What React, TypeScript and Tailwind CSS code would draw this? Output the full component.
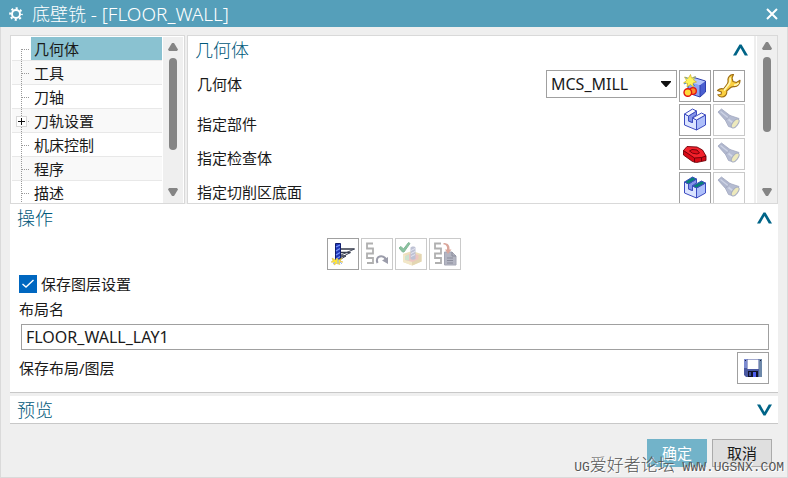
import { useState } from "react";
import type { ReactNode } from "react";

const treeItems = [
    { name: "几何体" },
    { name: "工具" },
    { name: "刀轴" },
    { name: "刀轨设置", children: true },
    { name: "机床控制" },
    { name: "程序" },
    { name: "描述" },
];

function GearIcon() {
    return (
        <svg width="14" height="14" viewBox="0 0 14 14" fill="none" stroke="#fff">
            <circle cx="7" cy="7" r="4" strokeWidth="2" />
            <circle cx="7" cy="7" r="5.8" strokeWidth="2" strokeDasharray="2.1 2.455" strokeDashoffset="1.05" />
        </svg>
    );
}

function Chevron({ down }: { down?: boolean }) {
    return (
        <svg width="15" height="12" viewBox="0 0 15 12" fill="#006487" className={down ? "rotate-180" : ""}>
            <path d="M0 11.500 6.500.5h2l6.500 11h-3.200L7.500 4 3.200 11.500z" />
        </svg>
    );
}

function NewGeometryIcon() {
    return (
        <svg width="24" height="24" viewBox="0 0 24 24">
            <path d="M5 7 11 3.500 22.500 7 17 11z" fill="#b4c6fb" />
            <path d="M5 7 17 11v12L5 19z" fill="#8ca2f3" />
            <path d="M17 11 22.500 7v11L17 23z" fill="#4a5fd0" />
            <path d="M5 7 11 3.500 22.500 7v11L17 23 5 19zM17 11v12" fill="none" stroke="#2d3fae" />
            <path d="M4 15h6v6H4z" fill="#f32b1c" />
            <circle cx="10" cy="17" r="3.300" fill="#ff8a2a" stroke="#e01010" strokeWidth="1.300" />
            <circle cx="4.800" cy="18.500" r="3.800" fill="#ffd83a" stroke="#e01010" strokeWidth="1.400" />
            <path d="M7.500.5 8.500 4l4-1.500L10.500 6l3 2-3.500 1 .5 4-3-2.500L4 13l.5-3.500L.5 9l3-2.500L1.500 3l4 1z" fill="#fff45a" stroke="#c7a512" strokeWidth=".6" />
            <path d="m2.500 3 2 2M1 10l2-1M12 2.500l-2 2M12 12l-2-2" stroke="#3e8bd8" />
        </svg>
    );
}

function WrenchIcon() {
    return (
        <svg width="24" height="24" viewBox="0 0 24 24">
            <path
                d="M16.500.5c-3.500 0-6 2.800-5.500 6 .3 2-.2 3-1.500 4.500L6.500 15c-1.500-.6-4-.3-6 1.500l4 1.500-.5 2.500-3.200.3c1.700 2.700 5.500 3 7.700.7 1.300-1.300 1.500-2.800 1.200-4.500l4-3.500c1-.8 2-1 3.500-.9 3.300.2 6-2.500 5.800-6.300L19.500 8.500 16 7.500 15 4z"
                fill="#fbd040"
                stroke="#9c6c12"
                strokeWidth="1.100"
                strokeLinejoin="round"
            />
            <path d="M13.500 3.500c-1 3 .2 4.500-1.500 6.500L7 16.500M17 11c2 .3 3.500-.5 4.500-2" fill="none" stroke="#fff7b5" strokeWidth="1.700" />
        </svg>
    );
}

function PartIcon({ top }: { top: string }) {
    return (
        <svg width="24" height="24" viewBox="0 0 24 24" stroke="#3c4bc0" strokeWidth="1" strokeLinejoin="round">
            <path d="M1.500 6 5.500 8v5l4 1.500v-5L13.500 12v10L1.500 17z" fill="#dbe4ff" />
            <path d="M13.500 12 22.500 7v10l-9 5z" fill="#aebffa" />
            <path d="M5.500 8 13.500 3v4L9.500 9.500v5l-4-1.500z" fill="#8494e8" />
            <path d="M1.500 6 9.500 1l4 2-8 5z" fill={top} />
            <path d="m9.500 10 9-5 4 2-9 5z" fill={top} />
        </svg>
    );
}

function CheckBodyIcon() {
    return (
        <svg width="24" height="24" viewBox="0 0 24 24" stroke="#6c0008" strokeWidth=".9" strokeLinejoin="round">
            <path d="M.5 8.500V13l9 6.500 4 1 9.500-2v-4.500l-11 1z" fill="#d80916" />
            <path d="M.5 8.500 4 4.500 14 5l5.500 3 3.500 6-4.500 1.500-7 .5z" fill="#f3222c" />
            <path d="M11.500 16v4.500M18.500 15.500V19" fill="none" />
            <path d="M6.500 9 9 7.500l5 .5 2.500 3-2.500 1-4.500-.8z" fill="#e0101c" />
        </svg>
    );
}

function FlashlightIcon() {
    return (
        <svg width="24" height="24" viewBox="0 0 24 24" className="opacity-70">
            <path d="M1 4 4.500 1 13 7.500 8.500 12.500z" fill="#8f99ba" stroke="#7a83a4" strokeWidth=".8" />
            <path d="m3.500 3.500 8 6.500" stroke="#b9c1da" strokeWidth="1.400" />
            <path d="m8.500 12.500 4.500-5 9 3-7 9-3.500-1z" fill="#97a1c0" stroke="#7a83a4" strokeWidth=".8" />
            <path d="m11.500 11.500 4 3" stroke="#bcc4dc" strokeWidth="1.800" />
            <ellipse cx="18.200" cy="15.500" rx="2.600" ry="5.200" transform="rotate(38 18.200 15.500)" fill="#e6e1a0" stroke="#858ea8" />
        </svg>
    );
}

function GenerateIcon() {
    return (
        <svg width="24" height="24" viewBox="0 0 24 24" fill="none">
            <path d="M10 7h13.500M9 7l-1 .5M10 10.500h9.500M10 14h5" stroke="#333848" strokeWidth="1.300" />
            <path d="M23.500 7 10 13M19.500 10.500 10 15.500M15 14l-5 3" stroke="#444a5c" />
            <path d="M4.500 1.500h5V18h-5z" fill="#2137b8" stroke="#101d6c" />
            <path d="m5 5 4-2M5 9l4-2.500M5 13l4-2.500M5 17l4-2.500" stroke="#7897fb" strokeWidth="1.200" />
            <path d="m1 16 3.500 2 1.500-2 1.500 2 3.500-2-2 3 3 1-4 .5 1 2-3.500-1-2.500 1.500.5-2.500-3.500-.5 2-1z" fill="#ffe63a" stroke="#d9b33a" strokeWidth=".5" />
            <path d="M7 17.500v4M2 22l2-2M11 22l-2-2" stroke="#8fb4ff" />
        </svg>
    );
}

function ReplayIcon() {
    return (
        <svg width="24" height="24" viewBox="0 0 24 24" fill="none" stroke="#b0b0b0" strokeWidth="1.800">
            <path d="M8 1.500H2v5h6v5H2v4.500h6v5H2" />
            <path d="M12.500 21c-3-7 6-9 8.500-3.500" stroke="#9b9caa" strokeWidth="2" />
            <path d="M17 18.500 23 15v7z" fill="#9b9caa" stroke="none" />
        </svg>
    );
}

function VerifyIcon() {
    return (
        <svg width="24" height="24" viewBox="0 0 24 24" className="opacity-50">
            <path d="m4 12 9-3 9.500 3v7.500l-9 4L4 20z" fill="#dcc078" />
            <path d="m4 12 9 3v8.500L4 20z" fill="#e6d193" />
            <path d="m22.500 12-9.500 3v8.500l9.500-4z" fill="#c9ae68" />
            <path d="m6 14 7-3 6.500 2v4l-6 3-7.500-2z" fill="#dc8d84" />
            <path d="m6 14 4-1.500v6L6 18z" fill="#9cc7a0" />
            <path d="M11.500 5.500c1-1.500 4.500-1.500 5 0V17c-1.500 1-3.500 1-5 0z" fill="#7f86aa" />
            <path d="m12 8.500 4-2M12 11.500l4-2M12 14.500l4-2" stroke="#c9cde6" />
            <path d="m0 6 2-1.500L4.500 7 9.500.5l1.500 1L5 10H3.500z" fill="#158742" stroke="#0e7333" />
        </svg>
    );
}

function ListIcon() {
    return (
        <svg width="24" height="24" viewBox="0 0 24 24" fill="none">
            <path d="M8 1.500H2v5h6v5H2v4.500h6v5H2" stroke="#b0b0b0" strokeWidth="1.800" />
            <path d="M11.500 10H19l4 4v9H11.500z" fill="#b3b5c2" stroke="#a4a6b4" />
            <path d="M19 10v4h4M14 16h6M14 18.500h6M14 21h6" stroke="#8b8d9c" />
            <path d="M10.500 1c4 0 6.500 2 6 6.500h2L15 12l-3-4.500h2c.5-3-1-5-3.500-5z" fill="#daa69b" />
        </svg>
    );
}

function SaveIcon() {
    return (
        <svg width="20" height="20" viewBox="0 0 20 20">
            <path d="M1 1h18v18H3l-2-2z" fill="#4a58a0" />
            <path d="M1 1h3v9H1z" fill="#7b8ad0" />
            <path d="M16 1h3v18h-3z" fill="#6d88a9" />
            <path d="M4.500 1.500h11V11h-11z" fill="#fff" />
            <path d="M5 13h10v6H5z" fill="#10142c" />
            <path d="M6 14h2v4H6z" fill="#3d4a9c" />
            <path d="M10 14h3v5h-3z" fill="#5060ee" />
            <path d="M2 2h1v1H2zM17 2h1v1h-1z" fill="#161b3e" />
        </svg>
    );
}

function IconButton({ label, disabled, children }: { label: string; disabled?: boolean; children: ReactNode }) {
    return (
        <button
            type="button"
            aria-label={label}
            disabled={disabled}
            className="flex size-8 shrink-0 items-center justify-center border border-[#a0a0a0] bg-white disabled:border-[#cacaca]"
        >
            {children}
        </button>
    );
}

function ScrollTrack({ long }: { long?: boolean }) {
    return (
        <div className="flex w-5 shrink-0 flex-col items-center bg-[#efefef] pt-1.5 pb-[7px]">
            <svg width="10" height="8" viewBox="0 0 10 8" fill="#858585"><path d="M4 0h2l4 6.500-1 1.500H1L0 6.500z" /></svg>
            <div className={long ? "mt-[7px] h-[92px] w-2 rounded-full bg-[#858585]" : "mt-[7px] h-[75px] w-2 rounded-full bg-[#858585]"}></div>
            <svg width="10" height="8" viewBox="0 0 10 8" fill="#858585" className="mt-auto"><path d="M1 0h8l1 1.500L6 8H4L0 1.500z" /></svg>
        </div>
    );
}

function TreeLines({ first, plus }: { first: boolean; plus?: boolean }) {
    return (
        <svg width="19" height="24" viewBox="0 0 19 24" fill="none" className="shrink-0" shapeRendering="crispEdges">
            <path d={first ? "M9.500 12v12" : "M9.500 0v24"} stroke="#999" strokeDasharray="1 1" />
            <path d="M10 12.500h8" stroke="#999" strokeDasharray="1 1" />
            {plus && (
                <>
                    <path d="M4.500 7.500h10v10h-10z" fill="#fff" stroke="#d8d8d8" />
                    <path d="M6 12.500h7M9.500 9v7" stroke="#111" />
                </>
            )}
        </svg>
    );
}

function SectionTitle({ title, down }: { title: string; down?: boolean }) {
    return (
        <div className="flex h-[27px] items-center justify-between pt-px text-[18px] text-[#00587a]">
            <h2 className="font-light">{title}</h2>
            <button type="button" aria-label={title}><Chevron down={down} /></button>
        </div>
    );
}

export default function App() {
    const [selected, setSelected] = useState("几何体");
    const [saveLayers, setSaveLayers] = useState(true);
    const [layout, setLayout] = useState("FLOOR_WALL_LAY1");

    const specifyRows = [
        { name: "指定部件", icon: <PartIcon top="#f6f8ff" /> },
        { name: "指定检查体", icon: <CheckBodyIcon /> },
        { name: "指定切削区底面", icon: <PartIcon top="#087f78" /> },
    ];

    return (
        <div className="relative flex min-h-screen flex-col bg-[#efefef] font-['Noto_Sans','Noto_Sans_CJK_SC',sans-serif] text-[15px] leading-6 text-[#1a1a1a]">
            <header className="flex h-[27px] items-center bg-[#559fba] pr-2.5 pl-[9px] text-white">
                <GearIcon />
                <h1 className="ml-[9px] text-[18px] font-light">底壁铣 <span className="text-[19px]">- [FLOOR_WALL]</span></h1>
                <button type="button" aria-label="关闭" className="ml-auto">
                    <svg width="12" height="12" viewBox="0 0 12 12" stroke="#fff" strokeWidth="2"><path d="m1 1 10 10M11 1 1 11" /></svg>
                </button>
            </header>

            <main className="flex grow flex-col border border-t-0 border-[#dadada] px-[9px] pt-2">
                <div className="flex h-[169px] gap-0.5">
                    <nav className="flex w-[175px] shrink-0 overflow-hidden border border-[#d9d9d9] bg-white p-px pb-0">
                        <ul className="mr-px grow">
                            {treeItems.map((item, i) => (
                                <li key={item.name} className="flex h-6 border-b border-[#e8e8e8] bg-white even:bg-[#f9f9f9]">
                                    <TreeLines first={i == 0} plus={item.children} />
                                    <button
                                        type="button"
                                        onClick={() => setSelected(item.name)}
                                        className={selected == item.name ? "h-[23px] grow bg-[#8ac2d1] pl-[3px] text-left" : "h-[23px] grow pl-[3px] text-left"}
                                    >
                                        {item.name}
                                    </button>
                                </li>
                            ))}
                        </ul>
                        <ScrollTrack long />
                    </nav>

                    <section className="flex grow overflow-hidden border border-[#d9d9d9] bg-white">
                        <div className="grow pr-1.5 pl-[7px]">
                            <SectionTitle title="几何体" />
                            <div className="pt-[7px] pr-[3px] pl-0.5">
                                <div className="flex gap-0.5">
                                    <label htmlFor="geometry" className="grow pt-0.5">几何体</label>
                                    <div className="relative">
                                        <select id="geometry" className="h-7 w-[131px] appearance-none border border-[#a0a0a0] bg-white px-1 text-[16px]">
                                            <option>MCS_MILL</option>
                                        </select>
                                        <svg width="10" height="6" viewBox="0 0 10 6" className="pointer-events-none absolute top-[11px] right-1.5"><path d="M0 0h10v1L5.500 6h-1L0 1z" fill="#111" /></svg>
                                    </div>
                                    <IconButton label="新建几何体"><NewGeometryIcon /></IconButton>
                                    <IconButton label="编辑几何体"><WrenchIcon /></IconButton>
                                </div>
                                {specifyRows.map((row) => (
                                    <div key={row.name} className="flex gap-0.5 pt-0.5">
                                        <span className="grow pt-2">{row.name}</span>
                                        <IconButton label={row.name}>{row.icon}</IconButton>
                                        <IconButton label={"显示" + row.name} disabled><FlashlightIcon /></IconButton>
                                    </div>
                                ))}
                            </div>
                        </div>
                        <div className="mr-px w-0.5 shrink-0 bg-[#eee]"></div>
                        <ScrollTrack />
                    </section>
                </div>

                <section className="border-b border-[#c8c8c8] bg-white pr-1.5 pl-[7px]">
                    <SectionTitle title="操作" />
                    <div className="pt-[7px] pr-[3px] pb-2 pl-0.5">
                        <div className="flex justify-center gap-0.5 pb-px">
                            <IconButton label="生成"><GenerateIcon /></IconButton>
                            <IconButton label="重播" disabled><ReplayIcon /></IconButton>
                            <IconButton label="确认" disabled><VerifyIcon /></IconButton>
                            <IconButton label="列表" disabled><ListIcon /></IconButton>
                        </div>
                        <label className="flex h-[26px] items-center gap-1">
                            <span className="relative size-[18px]">
                                <input
                                    type="checkbox"
                                    checked={saveLayers}
                                    onChange={(e) => setSaveLayers(e.target.checked)}
                                    className="block size-[18px] appearance-none border border-[#0067c0] bg-white checked:bg-[#0067c0]"
                                />
                                {saveLayers && (
                                    <svg width="18" height="18" viewBox="0 0 18 18" fill="none" stroke="#fff" strokeWidth="1.400" className="pointer-events-none absolute inset-0"><path d="m3.500 9 3.500 3 7.500-7" /></svg>
                                )}
                            </span>
                            保存图层设置
                        </label>
                        <label htmlFor="layout" className="block h-[27px]">布局名</label>
                        <div className="flex pl-0.5">
                            <input
                                id="layout"
                                value={layout}
                                onChange={(e) => setLayout(e.target.value)}
                                className="h-[26px] grow border border-[#a0a0a0] bg-white px-1 text-[16px]"
                            />
                        </div>
                        <div className="flex items-center justify-between pt-0.5">
                            <span>保存布局/图层</span>
                            <IconButton label="保存布局/图层"><SaveIcon /></IconButton>
                        </div>
                    </div>
                </section>

                <section className="mt-[3px] border-b border-[#c8c8c8] bg-white pr-1.5 pl-[7px]">
                    <SectionTitle title="预览" down />
                </section>

                <footer className="flex justify-end gap-[5px] px-1.5 pt-[15px] pb-2">
                    <button type="button" className="h-7 w-[60px] bg-[#72b3c9] text-white">确定</button>
                    <button type="button" className="h-7 w-[60px] border border-[#ababab] bg-[#dfdfdf]">取消</button>
                </footer>
            </main>

            <p className="pointer-events-none absolute right-1 bottom-0 font-['Liberation_Mono','Noto_Sans_CJK_SC',monospace] text-[13px] leading-5 font-light whitespace-pre text-[#555] text-shadow-[1px_1px_0_#fff]">
                UG<span className="text-[17px]">爱好者论坛</span> WWW.UGSNX.COM
            </p>
        </div>
    );
}
